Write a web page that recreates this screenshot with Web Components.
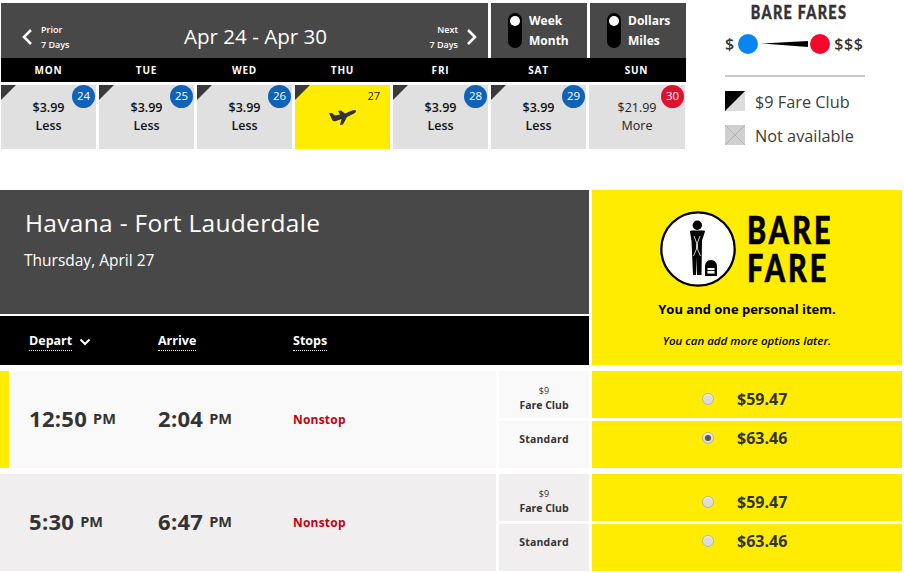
<!DOCTYPE html>
<html>
<head>
<meta charset="utf-8">
<style>
  html, body { margin: 0; background: #fff; }
  body { width: 904px; height: 573px; overflow: hidden; font-family: "Open Sans", sans-serif; color: #333; }
  .top { display: flex; align-items: flex-start; }
  .gap { height: 41px; }
</style>
</head>
<body>
<div class="top">
  <week-calendar>
    <cal-tile day="24" price="$3.99" label="Less" club></cal-tile>
    <cal-tile day="25" price="$3.99" label="Less" club></cal-tile>
    <cal-tile day="26" price="$3.99" label="Less" club></cal-tile>
    <cal-tile day="27" selected club></cal-tile>
    <cal-tile day="28" price="$3.99" label="Less" club></cal-tile>
    <cal-tile day="29" price="$3.99" label="Less" club></cal-tile>
    <cal-tile day="30" price="$21.99" label="More" high></cal-tile>
  </week-calendar>
  <fare-legend></fare-legend>
</div>
<div class="gap"></div>
<flight-results>
  <flight-row depart="12:50" arrive="2:04" selected-row checked="standard"></flight-row>
  <flight-row depart="5:30" arrive="6:47"></flight-row>
</flight-results>

<script>
const weekCalendarTemplate = document.createElement('template');
weekCalendarTemplate.innerHTML = `
  <style>
    :host { display: block; width: 686px; margin: 3px 0 0 1px; flex: none; }
    .head { display: flex; gap: 3px; height: 55px; color: #fff; }
    .range { flex: none; width: 487px; background: #484848; display: flex; align-items: center; box-sizing: border-box; padding: 12px 10px 0 20px; }
    .nav { display: flex; align-items: center; gap: 8px; flex: none; }
    .nav div { font-size: 9px; line-height: 15px; font-weight: 600; }
    .nav.next div { text-align: right; }
    .dates { flex: 1; text-align: center; font-size: 20.6px; font-weight: 400; padding-left: 12px; position: relative; top: -1px; }
    .toggle { flex: none; width: 96px; background: #484848; display: flex; align-items: center; box-sizing: border-box; padding-left: 17px; gap: 7px; font-size: 12px; font-weight: 700; line-height: 20px; }
    .pill { width: 14px; height: 35px; border-radius: 7px; background: #000; position: relative; }
    .pill::before { content: ""; position: absolute; left: 2px; top: 3px; width: 10px; height: 10px; border-radius: 50%; background: #fff; }
    .days { display: grid; grid-template-columns: repeat(7, 95px); column-gap: 3px; background: #000; height: 24px; width: 685px; color: #fff; font-size: 10px; font-weight: 700; letter-spacing: .8px; line-height: 24px; text-align: center; }
    .tiles { display: grid; grid-template-columns: repeat(6, 95px) 96px; column-gap: 3px; margin-top: 3px; }
  </style>
  <div class="head">
    <div class="range">
      <div class="nav">
        <svg width="12" height="18" viewBox="0 0 12 18"><path d="M10 2 3 9l7 7" fill="none" stroke="#fff" stroke-width="2.6"/></svg>
        <div>Prior<br>7 Days</div>
      </div>
      <span class="dates">Apr 24 - Apr 30</span>
      <div class="nav next">
        <div>Next<br>7 Days</div>
        <svg width="12" height="18" viewBox="0 0 12 18"><path d="M2 2l7 7-7 7" fill="none" stroke="#fff" stroke-width="2.6"/></svg>
      </div>
    </div>
    <div class="toggle"><span class="pill"></span><span>Week<br>Month</span></div>
    <div class="toggle"><span class="pill"></span><span>Dollars<br>Miles</span></div>
  </div>
  <div class="days"><span>MON</span><span>TUE</span><span>WED</span><span>THU</span><span>FRI</span><span>SAT</span><span>SUN</span></div>
  <div class="tiles"><slot></slot></div>
`;

class WeekCalendar extends HTMLElement {
  constructor() {
    super();
    this.attachShadow({ mode: 'open' });
    this.shadowRoot.appendChild(weekCalendarTemplate.content.cloneNode(true));
  }
}
customElements.define('week-calendar', WeekCalendar);

class CalTile extends HTMLElement {
  constructor() {
    super();
    this.attachShadow({ mode: 'open' });
  }
  connectedCallback() {
    const selected = this.hasAttribute('selected');
    const high = this.hasAttribute('high');
    const body = selected
      ? `<svg class="plane" width="28" height="18" viewBox="0 0 28 18"><path fill="#333" d="M0 5h3l3 2.500 5-1-2-3.500 3-.5 4 3 7-3c2.500-1 4.500-.5 4 1-.5 1.500-3 2.500-5 3.500l-4 2-4 7.500-3 .5 1.500-6L7 13c-2 .5-3.500 0-4-1.500z"/></svg><span class="num">${this.getAttribute('day')}</span>`
      : `<span class="badge">${this.getAttribute('day')}</span>
         <div class="price">${this.getAttribute('price')}</div>
         <div class="label">${this.getAttribute('label')}</div>`;
    this.shadowRoot.innerHTML = `
      <style>
        :host { display: block; position: relative; height: 64px; background: ${selected ? '#ffec00' : '#e0e0e0'}; text-align: center; overflow: hidden; color: ${high ? '#222' : '#111'}; font-weight: ${high ? 400 : 600}; }
        .corner { position: absolute; left: 0; top: 0; width: 0; height: 0; border-top: 15px solid #3a3a3a; border-right: 15px solid transparent; }
        .badge { position: absolute; right: 1px; top: 0; width: 23px; height: 23px; border-radius: 50%; background: ${high ? '#e0102e' : '#0f62b8'}; color: #fff; font-size: 11.5px; font-weight: 400; line-height: 21px; }
        .price { font-size: 12.5px; line-height: 20px; padding-top: 13px; }
        .label { font-size: 12.5px; line-height: 15px; }
        .plane { position: absolute; left: 34px; top: 23px; }
        .num { position: absolute; right: 10px; top: 4px; font-size: 11px; line-height: 14px; font-weight: 400; color: #222; }
      </style>
      ${this.hasAttribute('club') ? '<span class="corner"></span>' : ''}
      ${body}
    `;
  }
}
customElements.define('cal-tile', CalTile);

const fareLegendTemplate = document.createElement('template');
fareLegendTemplate.innerHTML = `
  <style>
    :host { display: block; width: 140px; margin: 0 0 0 38px; flex: none; color: #333; }
    h2 { margin: 0; padding: 3px 0 0 10px; font-family: Lato, sans-serif; font-size: 18px; line-height: 18px; font-weight: 900; letter-spacing: 1.600px; text-align: center; white-space: nowrap; transform: scaleX(.8); -webkit-text-stroke: .4px #333; }
    .scale { display: flex; align-items: center; height: 20px; margin-top: 13px; font-size: 16px; font-weight: 600; }
    .dot { width: 20px; height: 20px; border-radius: 50%; flex: none; }
    .scale svg { flex: none; margin: 0 2px 0 3px; }
    .rule { height: 2px; background: #c8c8c8; margin-top: 21px; }
    .key { display: flex; align-items: center; gap: 10px; font-size: 16.300px; line-height: 20px; margin-top: 14px; color: #3c3c3c; }
    .key:first-of-type { margin-top: 15px; }
    .key svg { flex: none; }
    .key span { position: relative; top: 1px; }
  </style>
  <h2>BARE FARES</h2>
  <div class="scale">
    <span>$</span><span class="dot" style="background:#0a84f0;margin-left:4px"></span>
    <svg width="47" height="8" viewBox="0 0 47 8"><path d="M0 3.500 47 1v6z" fill="#000"/></svg>
    <span class="dot" style="background:#f5082c"></span><span style="margin-left:4px;letter-spacing:.6px">$$$</span>
  </div>
  <div class="rule"></div>
  <div class="key">
    <svg width="20" height="20" viewBox="0 0 20 20"><rect width="20" height="20" fill="#dcdcdc"/><path d="M0 0h20L0 20z" fill="#000"/></svg>
    <span>$9 Fare Club</span>
  </div>
  <div class="key">
    <svg width="20" height="20" viewBox="0 0 20 20"><rect width="20" height="20" fill="#cfcfcf"/><path d="M0 0l20 20M20 0 0 20" stroke="#b4b4b4" stroke-width="1"/></svg>
    <span>Not available</span>
  </div>
`;

class FareLegend extends HTMLElement {
  constructor() {
    super();
    this.attachShadow({ mode: 'open' });
    this.shadowRoot.appendChild(fareLegendTemplate.content.cloneNode(true));
  }
}
customElements.define('fare-legend', FareLegend);

const flightResultsTemplate = document.createElement('template');
flightResultsTemplate.innerHTML = `
  <style>
    :host { display: block; width: 902px; }
    .top { display: flex; gap: 3px; height: 175px; }
    .left { width: 589px; flex: none; display: flex; flex-direction: column; }
    .banner { height: 124px; background: #484848; color: #fff; box-sizing: border-box; padding: 14px 0 0 25px; }
    h1 { margin: 0; font-size: 24.500px; line-height: 38px; font-weight: 400; letter-spacing: .3px; }
    .date { font-size: 15.500px; line-height: 22px; margin-top: 7px; margin-left: -1px; }
    .cols { margin-top: 2px; height: 49px; background: #000; color: #fff; display: grid; grid-template-columns: 129px 135px 1fr; padding-left: 29px; font-size: 12.500px; font-weight: 700; align-items: center; }
    .cols span span { border-bottom: 1px dotted #fff; padding-bottom: 1px; }
    .cols > span { position: relative; top: 1px; display: flex; align-items: center; gap: 7px; }
    .bare { flex: 1; background: #ffec00; color: #000; text-align: center; display: flex; flex-direction: column; align-items: center; }
    .logo { display: flex; align-items: center; gap: 11px; padding-top: 21px; margin-left: -4px; }
    .word { width: 83px; font-family: Lato, sans-serif; font-size: 38px; line-height: 38px; font-weight: 900; letter-spacing: 4px; text-align: left; white-space: nowrap; transform: scaleX(.76); transform-origin: left center; position: relative; top: -1px; -webkit-text-stroke: .6px #000; }
    .one { font-size: 13px; line-height: 18px; font-weight: 700; margin-top: 13px; }
    .later { font-size: 11.500px; line-height: 16px; font-weight: 600; font-style: italic; margin-top: 15px; }
  </style>
  <div class="top">
    <div class="left">
      <div class="banner">
        <h1>Havana - Fort Lauderdale</h1>
        <div class="date">Thursday, April 27</div>
      </div>
      <div class="cols">
        <span><span>Depart</span><svg width="12" height="8" viewBox="0 0 12 8"><path d="M1.500 1.500 6 6l4.500-4.500" fill="none" stroke="#fff" stroke-width="2"/></svg></span>
        <span><span>Arrive</span></span>
        <span><span>Stops</span></span>
      </div>
    </div>
    <div class="bare">
      <div class="logo">
        <svg width="76" height="76" viewBox="0 0 76 76">
          <circle cx="38" cy="38" r="36.700" fill="#fff" stroke="#000" stroke-width="2.300"/>
          <circle cx="37.300" cy="14.300" r="4.700" fill="#000"/>
          <path d="M30 20.500C30 19.500 31 19.500 32 19.500h11c1 0 2 0 2 1l-3 9-.5 34.500H37l-.5-18-.5 18h-3L31.500 30z" fill="#000"/>
          <path d="M34 25l3 8 3-8M36.500 33v5l-3 7M37.500 33v5l3 7" fill="none" stroke="#fff" stroke-width=".8"/>
          <path d="M45 65V55c0-3 2.500-6 6-6 3.500 0 6 3 6 6v10z" fill="#000"/>
          <path d="M47 56.500h8V63h-8zM47 59.500h8" fill="#fff" stroke="#000" stroke-width=".9"/>
        </svg>
        <div class="word">BARE<br>FARE</div>
      </div>
      <div class="one">You and one personal item.</div>
      <div class="later">You can add more options later.</div>
    </div>
  </div>
  <slot></slot>
`;

class FlightResults extends HTMLElement {
  constructor() {
    super();
    this.attachShadow({ mode: 'open' });
    this.shadowRoot.appendChild(flightResultsTemplate.content.cloneNode(true));
  }
}
customElements.define('flight-results', FlightResults);

class FlightRow extends HTMLElement {
  constructor() {
    super();
    this.attachShadow({ mode: 'open' });
  }
  connectedCallback() {
    const active = this.hasAttribute('selected-row');
    const checked = this.getAttribute('checked');
    const bg = active ? '#f9f9f9' : '#f0eeef';
    this.shadowRoot.innerHTML = `
      <style>
        :host { display: grid; grid-template-columns: 496px 90px 310px; column-gap: 3px; margin-top: 6px; height: 97px; }
        .info { background: ${bg}; display: grid; grid-template-columns: 129px 135px 1fr; align-items: center; padding-left: 29px; box-sizing: border-box; position: relative; color: #333; }
        .bar { position: absolute; left: 0; top: 0; bottom: 0; width: 9px; background: #ffec00; }
        .time { font-size: 22px; font-weight: 700; letter-spacing: .3px; white-space: nowrap; position: relative; top: -2px; }
        .time small { font-size: 14.500px; letter-spacing: 0; position: relative; top: -3px; }
        .stop { color: #c5000f; font-size: 12px; font-weight: 700; letter-spacing: .2px; }
        .classes, .fares { display: grid; grid-template-rows: 47px 47px; row-gap: 3px; }
        .cls { background: ${bg}; text-align: center; font-size: 10.500px; font-weight: 700; line-height: 15px; color: #333; box-sizing: border-box; }
        .cls.club { padding-top: 12px; }
        .cls.club small { font-size: 9px; display: block; font-weight: 400; }
        .cls.std { padding-top: 11px; letter-spacing: .2px; }
        .fare { background: #ffec00; display: flex; align-items: flex-start; box-sizing: border-box; padding-left: 110px; gap: 23px; font-size: 16px; font-weight: 700; line-height: 20px; color: #333; }
        .fare.low { padding-top: 18px; }
        .fare.up { padding-top: 7px; }
        .radio { width: 12px; height: 12px; border-radius: 50%; background: #dcdcdc; border: 1px solid #b5b5b5; box-sizing: border-box; margin-top: 4px; flex: none; display: flex; align-items: center; justify-content: center; box-shadow: inset 0 1px 1px #fff; }
        .radio.on::before { content: ""; width: 6px; height: 6px; border-radius: 50%; background: #555; }
      </style>
      <div class="info">
        ${active ? '<span class="bar"></span>' : ''}
        <span class="time">${this.getAttribute('depart')} <small>PM</small></span>
        <span class="time">${this.getAttribute('arrive')} <small>PM</small></span>
        <span class="stop">Nonstop</span>
      </div>
      <div class="classes">
        <div class="cls club"><small>$9</small>Fare Club</div>
        <div class="cls std">Standard</div>
      </div>
      <div class="fares">
        <div class="fare low"><span class="radio"></span><span>$59.47</span></div>
        <div class="fare up"><span class="radio ${checked === 'standard' ? 'on' : ''}"></span><span>$63.46</span></div>
      </div>
    `;
  }
}
customElements.define('flight-row', FlightRow);
</script>
</body>
</html>
